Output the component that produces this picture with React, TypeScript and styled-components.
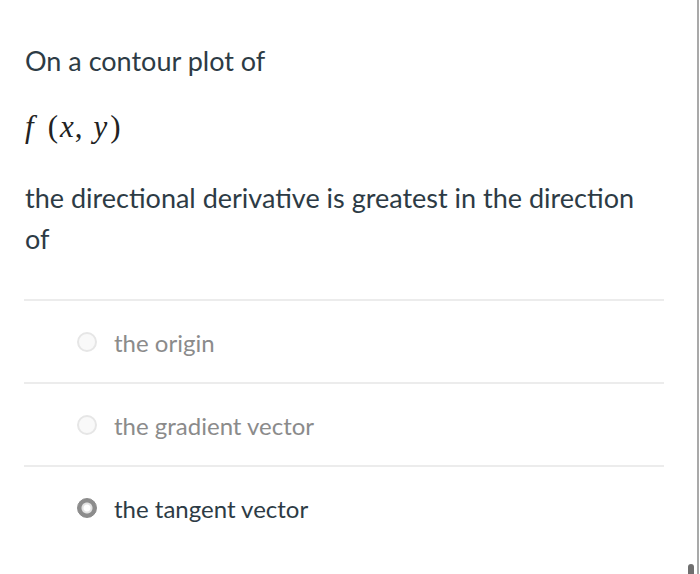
import React from "react";
import styled, { createGlobalStyle } from "styled-components";

const GlobalStyle = createGlobalStyle`
  html, body {
    margin: 0;
    padding: 0;
    background: #ffffff;
  }
  body {
    font-family: Lato, "Open Sans", sans-serif;
    color: #2d3b45;
  }
`;

const Page = styled.div`
  position: relative;
  width: 700px;
  height: 574px;
  overflow: hidden;
  background: #ffffff;
`;

const Question = styled.div`
  width: 640px;
  padding: 40px 0 0 24px;
`;

const Paragraph = styled.p`
  margin: 0;
  font-size: 27px;
  line-height: 41px;
  color: #2d3b45;
  padding-left: 1px;
  width: 625px;
`;

const MathLine = styled.div`
  margin: 29px 0 33px 0;
  padding-left: 1px;
  font-family: "Liberation Serif", "DejaVu Serif", serif;
  font-size: 31px;
  line-height: 34px;
  color: #222;
`;

const Var = styled.i<{ $gap?: number }>`
  font-style: italic;
  margin-right: ${(p) => p.$gap ?? 0}px;
`;

const Sym = styled.span<{ $gap?: number }>`
  margin-right: ${(p) => p.$gap ?? 0}px;
`;

const Answers = styled.div`
  margin-top: 40px;
`;

const Answer = styled.label`
  display: flex;
  align-items: center;
  height: 83px;
  border-top: 2px solid #ececec;
  padding-left: 53px;
  box-sizing: border-box;
`;

const Radio = styled.span<{ $checked?: boolean }>`
  width: 20px;
  height: 20px;
  border-radius: 50%;
  box-sizing: border-box;
  flex: none;
  margin-right: 17px;
  background: ${(p) =>
    p.$checked
      ? "radial-gradient(circle, #ffffff 0 3px, #e2e2e2 4px 5px, #8c8c8c 6px)"
      : "#f9f9f9"};
  border: ${(p) => (p.$checked ? "1px solid #8a8a8a" : "2px solid #e6e6e6")};
`;

const AnswerText = styled.span<{ $checked?: boolean }>`
  font-size: 24px;
  color: ${(p) => (p.$checked ? "#2d3b45" : "#8b8b8b")};
  position: relative;
  top: 1px;
`;

const EdgeLine = styled.div`
  position: absolute;
  top: 0;
  right: 1px;
  width: 2px;
  height: 100%;
  background: #a9a9a9;
`;

const Thumb = styled.div`
  position: absolute;
  right: 6px;
  bottom: 0;
  width: 6px;
  height: 10px;
  border-radius: 3px 3px 0 0;
  background: #6f6f6f;
`;

const answers = [
  { text: "the origin", checked: false },
  { text: "the gradient vector", checked: false },
  { text: "the tangent vector", checked: true },
];

export default function App() {
  return (
    <Page>
      <GlobalStyle />
      <Question>
        <Paragraph>On a contour plot of</Paragraph>
        <MathLine>
          <Var $gap={14}>f</Var>
          <Sym $gap={2}>(</Sym>
          <Var $gap={1}>x</Var>
          <Sym $gap={11}>,</Sym>
          <Var $gap={3}>y</Var>
          <Sym>)</Sym>
        </MathLine>
        <Paragraph>
          the directional derivative is greatest in the direction of
        </Paragraph>
        <Answers>
          {answers.map((a) => (
            <Answer key={a.text}>
              <Radio $checked={a.checked} />
              <AnswerText $checked={a.checked}>{a.text}</AnswerText>
            </Answer>
          ))}
        </Answers>
      </Question>
      <EdgeLine />
      <Thumb />
    </Page>
  );
}
